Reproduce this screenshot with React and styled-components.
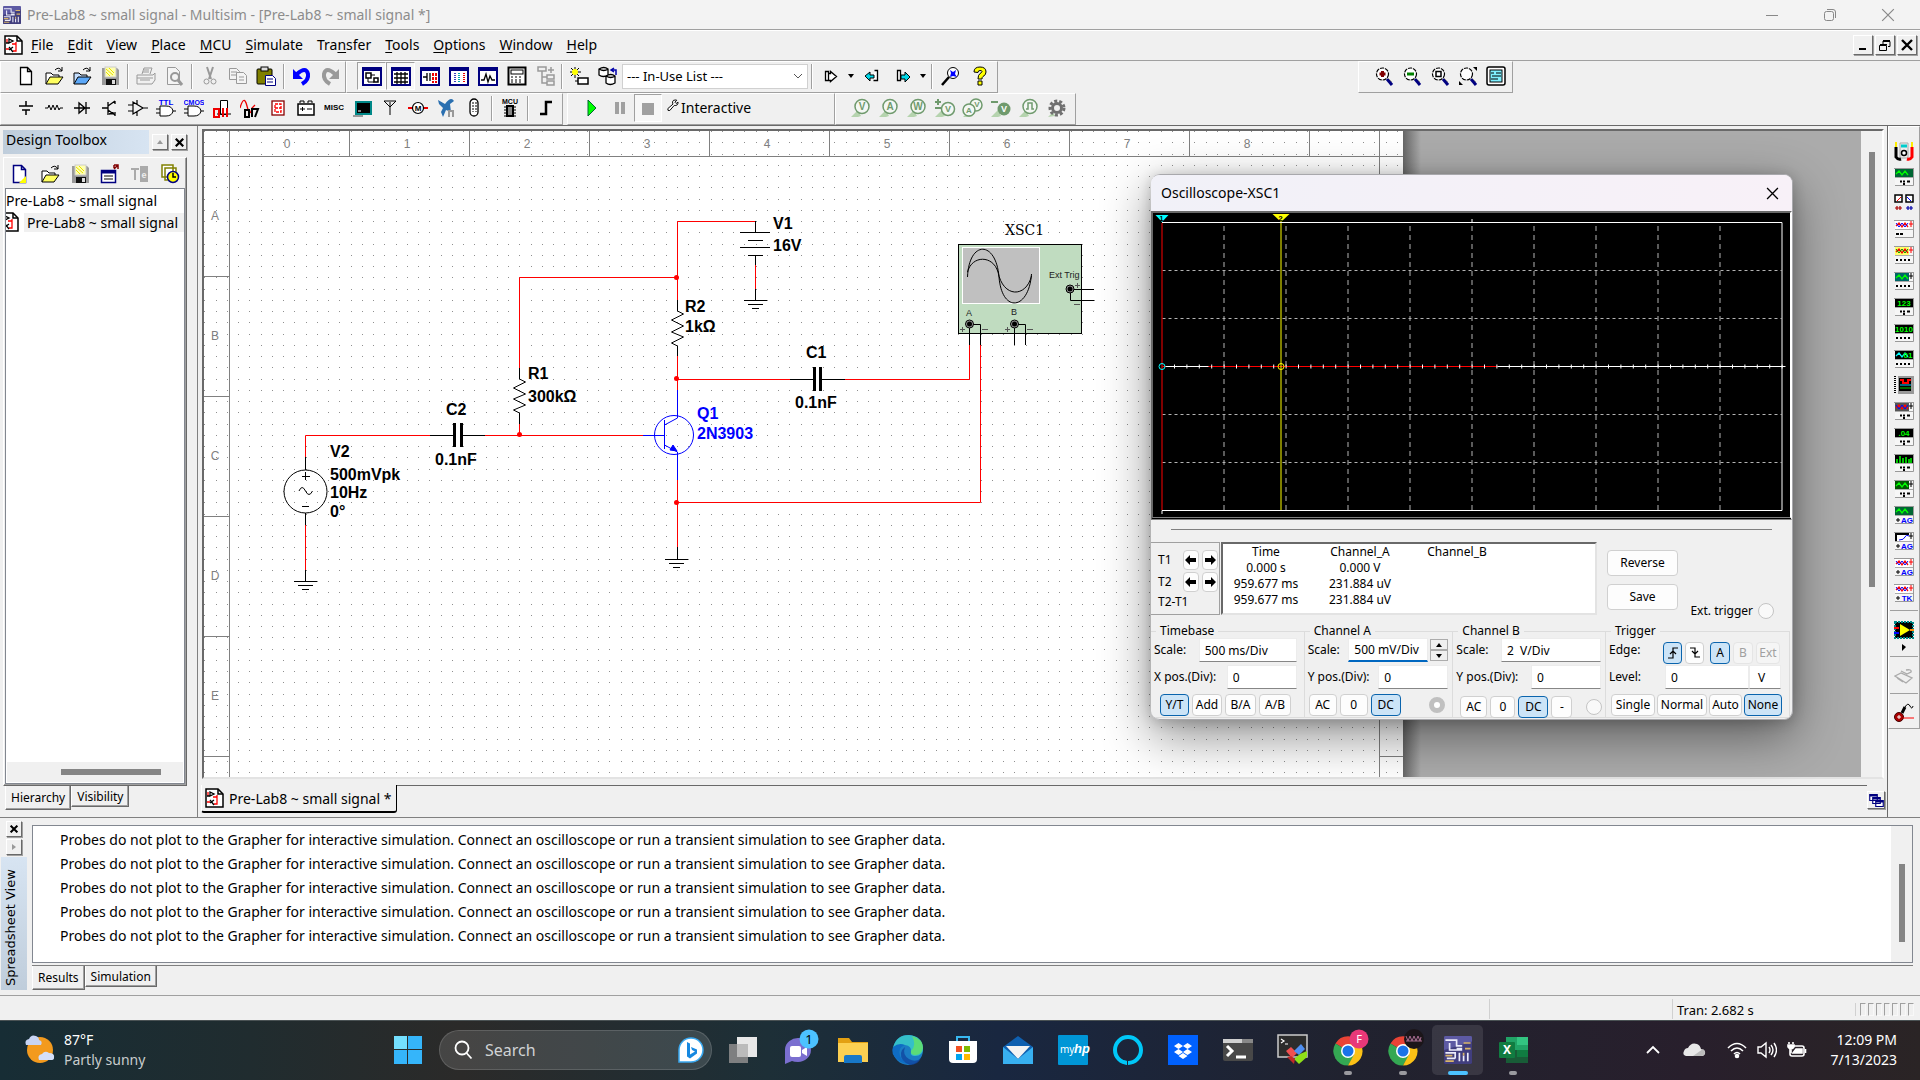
import { useState } from 'react';
import styled, { createGlobalStyle, css } from 'styled-components';

const UI = '"Noto Sans", "Open Sans", sans-serif';
const ARIAL = '"Liberation Sans", Arial, sans-serif';

const GlobalStyle = createGlobalStyle`
  *{ box-sizing: border-box; }
  body{
    margin: 0;
    background: #f0f0f0;
    font-family: ${UI};
    font-size: 14px;
    color: #000;
    overflow: hidden;
  }
  button, input, select{
    font: inherit;
    color: inherit;
    margin: 0;
    padding: 0;
    border: none;
    background: none;
  }
  ul{ list-style: none; margin: 0; padding: 0; }
  svg{ display: block; flex: none; }
`;

/* ---------- toolbar icons, drawn on a 20x20 field ---------- */

const page = <path d="M4.500 1.500h7l4 4v13h-11z M11.500 1.500v4h4" fill="#fff" stroke="#000" strokeWidth="1.300" />;
const lens = <><circle cx="8.500" cy="8" r="6" fill="#fff" stroke="#000" strokeWidth="1.200" strokeDasharray="4 1" /><path d="M13 13l5 6" stroke="#000080" strokeWidth="3" /><path d="M14 12l4 4" stroke="#999" /></>;
const frame = <><rect x="1" y="2" width="18" height="17" fill="#fff" stroke="#000080" strokeWidth="2" /><path d="M0 3h20" stroke="#000080" strokeWidth="4" /></>;
const openFolder = (a, b) => <><path d="M2 18V7h5l2 2h6v3" fill={b} stroke="#000" /><path d="M2 18l4-7h13l-5 7z" fill={a} stroke="#000" /><path d="M11 4q4-4 7 1M18 1v4h-4" fill="none" stroke="#000" /></>;
const floppy = <><path d="M2 2h15l2 2v15H2z" fill="#999" /><rect x="5" y="1" width="11" height="10" fill="#ffffb0" stroke="#ccc" /><path d="M6 3l7 6M9 2l5 5M6 6l4 4" stroke="#e6e000" /><rect x="6" y="13" width="10" height="6" fill="#111" /><rect x="12" y="14" width="3" height="4" fill="#ddd" /></>;

const Glyph = ({ t, x = 10, y = 14, size = 9, fill = '#000' }) => (
  <text x={x} y={y} fontSize={size} fontWeight="bold" fontFamily={ARIAL} textAnchor="middle" fill={fill}>{t}</text>
);

const gate = <><path d="M4 8h6q6 0 7 5q-1 5-7 5H4zM0 11h4M0 15h4M17 13h3" fill="#fff" stroke="#000" /></>;

const icons = {
  newDoc: page,
  open: openFolder('#ffff60', '#fff'),
  openBlue: openFolder('#5ca8f8', '#c5dfff'),
  save: floppy,
  print: <g fill="#f0f0f0" stroke="#999"><path d="M6 8l2-6h8l-2 6" /><path d="M1 9h16l2-2v7l-3 4H1z" /><path d="M4 14h10M8 4h5M7 6h6M1 12h16" /></g>,
  preview: <g fill="#f4f4f4" stroke="#999"><path d="M3.500 1.500h8l4 4v13h-12z" /><circle cx="11" cy="11" r="4" strokeWidth="2" /><path d="M14 14l4 5" strokeWidth="3" /></g>,
  cut: <g fill="none" stroke="#999"><path d="M7 1l4 12M13 1L9 13" strokeWidth="2" /><circle cx="6.500" cy="15.500" r="2.500" /><circle cx="13.500" cy="15.500" r="2.500" /></g>,
  copy: <g fill="#f4f4f4" stroke="#999"><path d="M1.500 2.500h7l3 3v8h-10zM3 6h6M3 9h5" /><path d="M8.500 6.500h7l3 3v8h-10zM11 11h5M11 14h5" /></g>,
  paste: <><rect x="1" y="3" width="15" height="15" rx="1" fill="#808000" stroke="#000" /><rect x="5" y="1" width="7" height="4" fill="#ddd" stroke="#000" /><path d="M9.500 9.500h7l3 3v7h-10z" fill="#fff" stroke="#000080" /><path d="M11 13h6M11 16h6" stroke="#000080" /></>,
  undo: <><path d="M5 8q9-8 11 0q1 6-6 10" fill="none" stroke="#00f" strokeWidth="4" /><path d="M1 3v10h10z" fill="#00f" /></>,
  redo: <><path d="M15 8q-9-8-11 0q-1 6 6 10" fill="none" stroke="#999" strokeWidth="4" /><path d="M19 3v10h-10z" fill="#999" /></>,
  toolbox: <>{frame}<rect x="4" y="7" width="5" height="5" fill="#fff" stroke="#000" strokeWidth="1.500" /><rect x="12" y="12" width="4" height="4" fill="#fff" stroke="#000" strokeWidth="1.500" /><path d="M6 12v4h6M9 9h4" fill="none" stroke="#000" /></>,
  sheet: <><rect x="1" y="2" width="18" height="17" fill="#fff" stroke="#000080" strokeWidth="2" /><path d="M0 3h20" stroke="#000080" strokeWidth="4" /><path d="M3 8h14M3 12h14M3 16h14M6 6v12M10 6v12M14 6v12" stroke="#000" strokeWidth="1.300" /></>,
  netlist: <>{frame}<path d="M3 11h4M7 7v8M10 7v8" stroke="#000" strokeWidth="1.300" /><path d="M13 7v10M16 7v10" stroke="#e00" strokeWidth="2" strokeDasharray="3 1" /></>,
  bars: <>{frame}<path d="M6 7v10" stroke="#00a" strokeDasharray="1 1" strokeWidth="1.500" /><path d="M10 7v10" stroke="#0aa" strokeDasharray="1 1" strokeWidth="2" /><path d="M15 7v10" stroke="#e00" strokeDasharray="1 1" strokeWidth="2" /></>,
  graph: <>{frame}<path d="M3 14h3l2-6 2 8 2-6 2 4h3" fill="none" stroke="#000" strokeWidth="1.300" /></>,
  calc: <><rect x="1.500" y="1.500" width="17" height="17" fill="#fff" stroke="#000" strokeWidth="2" /><rect x="4" y="4" width="12" height="4" fill="none" stroke="#000" /><path d="M4 11h12M4 14h12M4 16h12" stroke="#000" strokeDasharray="2 2" /></>,
  tree: <g fill="none" stroke="#999" strokeWidth="1.500"><rect x="2" y="1" width="8" height="4" /><path d="M6 5v12h5M6 11h5M15 1v6M12 4h6" /><rect x="11" y="9" width="7" height="4" /><rect x="11" y="15" width="7" height="4" /></g>,
  wizard: <><path d="M6 1v11M1 6h11M2 2l8 8M10 2l-8 8" stroke="#000" /><circle cx="6" cy="6" r="3" fill="#ff0" /><rect x="9" y="12" width="10" height="6" fill="#fff" stroke="#000" strokeWidth="1.500" /><path d="M6 15h3" stroke="#000" /></>,
  database: <><path d="M1 3q5-3 9 0v6q-5 3-9 0zM1 3q5 3 9 0M8 10q5-3 9 0v7q-5 3-9 0zM8 10q5 3 9 0" fill="#fff" stroke="#000" strokeWidth="1.300" /><path d="M18 9V4h-4M16 2l-3 2 3 2" fill="none" stroke="#00a" strokeWidth="1.500" /></>,
  markupA: <path d="M4.500 5.500h3v2h2v-2l6 5-6 5v-1h-5z M7.500 7v7" fill="#fff" stroke="#000" strokeWidth="1.300" />,
  markupB: <><path d="M12.500 4.500h3v10h-4" fill="#fff" stroke="#000" strokeWidth="1.300" /><path d="M3 10l5-4v3h4v3H8v3z" fill="#00d8e8" stroke="#000" /></>,
  markupC: <><path d="M4.500 4.500h3v10h-3z" fill="#fff" stroke="#000" strokeWidth="1.300" /><path d="M17 11l-5-5v3H8v4h4v3z" fill="#00d8e8" stroke="#000" /></>,
  find: <><circle cx="12" cy="7" r="5.500" fill="#fff" stroke="#000" /><path d="M9 4l3 2 3-2-1 4 2 3-4-1-3 1 1-4z" fill="#00f" /><path d="M8 11l-7 8" stroke="#000" strokeWidth="2.500" /></>,
  help: <path d="M4 6q0-5 6-5t6 5q0 3-3 4.500-1 .5-1 2.500H8q0-4 2-5.500 2-1 2-2t-2-1-2 2zM8 15h4v4H8z" fill="#ff0" stroke="#000" />,

  source: <path d="M10 3v5M3 8h14M6 12h8M10 12v5" fill="none" stroke="#000" strokeWidth="1.500" />,
  basic: <path d="M1 10h3l1-3 2 5 2-5 2 5 2-5 2 5 1-2h3" fill="none" stroke="#000" />,
  diode: <path d="M2 10h16M7 5v10l6-5zM14 4v12" fill="none" stroke="#000" strokeWidth="1.300" />,
  trans: <path d="M2 10h6M8 4v13M8 8l7-5M8 12l7 5M15 3v3M15 14v4M9 16l5-1" fill="none" stroke="#000" strokeWidth="1.300" />,
  opamp: <path d="M5 4v12l10-6zM0 7h5M0 13h5M15 10h5M9 2v4M9 14v4" fill="none" stroke="#000" strokeWidth="1.200" />,
  ttl: <>{gate}<Glyph t="TTL" y={7} size={8} fill="#00f" /></>,
  cmos: <>{gate}<Glyph t="CMOS" y={7} size={7} fill="#00f" /></>,
  miscDigital: <><path d="M8.500 2.500h7v14h-7zM5 16h14" fill="#fff" stroke="#000" /><path d="M2 11h5v8H2zM11 10v9M15 10v9" fill="none" stroke="#e00" strokeWidth="2" /></>,
  mixed: <><path d="M0 10q4-14 7-2t5 2l3-3" fill="none" stroke="#e00" strokeWidth="1.300" /><path d="M5 12h4v7H5zM12 19v-8h6l-3 8" fill="none" stroke="#000" strokeWidth="2" /></>,
  indicator: <><rect x="4" y="3" width="12" height="14" fill="#fff" stroke="#800" strokeWidth="1.300" /><path d="M7 6h6v8H7zM7 10h6" fill="none" stroke="#f00" strokeWidth="1.300" strokeDasharray="3 1" /></>,
  power: <><rect x="2" y="6" width="16" height="11" fill="#fff" stroke="#000" strokeWidth="1.500" /><path d="M4 5V3h4v2M12 5V3h4v2M4 11h5M11 11h5M6.500 9v4" fill="none" stroke="#000" /></>,
  misc: <Glyph t="MISC" y={12} size={8} />,
  peripheral: <><rect x="4" y="4" width="15" height="12" fill="#000" stroke="#088" strokeWidth="2" /><path d="M1 17h10v2H1z" fill="#999" /><path d="M6 13h3" stroke="#fff" /></>,
  rf: <path d="M10 17V9M4 3l6 6 6-6M10 4v5M4 3h12" fill="none" stroke="#000" />,
  motor: <><path d="M0 10h4M16 10h4" stroke="#e00" strokeWidth="2" /><circle cx="10" cy="10" r="5.500" fill="#fff" stroke="#000" strokeWidth="1.200" /><Glyph t="M" y={13} size={8} /></>,
  ni: <><path d="M2 2l7 4q6-8 9-3l-4 3 1 8-5-2-3 7-2-5 2-4-4-4z" fill="#2a6fb0" /><path d="M13 19v-6h4v6" fill="none" stroke="#999" strokeWidth="2" /></>,
  connector: <><rect x="6" y="1" width="8" height="17" rx="4" fill="#fff" stroke="#000" strokeWidth="1.300" /><path d="M9 4v10M12 4v10" stroke="#000" strokeDasharray="2 1" /></>,
  mcu: <><Glyph t="MCU" y={6} size={7} /><rect x="7" y="8" width="6" height="10" fill="#888" stroke="#000" strokeWidth="2" /><path d="M4 9h3M4 12h3M4 15h3M4 18h3M13 9h3M13 12h3M13 15h3M13 18h3" stroke="#000" /></>,
  hier: <path d="M4 16h6V4h6" fill="none" stroke="#000" strokeWidth="2.500" />,
  play: <path d="M6 2l8 8-8 8z" fill="#0f0" stroke="#063" />,
  pause: <path d="M5 4h4v12H5zM11 4h4v12h-4z" fill="#a0a0a0" />,
  stop: <path d="M4 5h12v12H4z" fill="#a0a0a0" />,
  wrench: <path d="M13 1q5-1 5 0l-3 3 2 2 3-2q0 6-6 5l-7 8q-4 1-3-3l8-7q-2-4 1-6z" fill="#fff" stroke="#000" strokeWidth="1.500" transform="scale(.8) translate(2 1)" />,
  plus: <>{lens}<path d="M8.500 5v6M5.500 8h6" stroke="#800000" strokeWidth="3" /></>,
  minus: <>{lens}<path d="M5 8h7" stroke="#008000" strokeWidth="3" /></>,
  area: <>{lens}<path d="M6 5.500h5v5H6z" fill="none" stroke="#000" strokeWidth="1.500" /></>,
  fit: <>{lens}<path d="M15 1h4v4zM1 15v4h4z" fill="#000" /></>,
  full: <><rect x="1" y="1" width="18" height="18" rx="2" fill="#fff" stroke="#000" strokeWidth="1.500" /><rect x="4" y="4" width="12" height="12" fill="#7ff0ff" stroke="#000" /><path d="M5 7h3M6 10h9M5 13h7M10 7h5" stroke="#000" /></>,

  newBlue: <><path d="M3.500 1.500h8l4 4v13h-12z M11.500 1.500v4h4" fill="#fff" stroke="#000080" strokeWidth="1.500" /><path d="M16 12v7h-7z" fill="#ff0" /></>,
  closeDoc: <><rect x="1.500" y="6.500" width="14" height="12" fill="#fff" stroke="#000080" strokeWidth="1.500" /><path d="M1 8h15" stroke="#000080" strokeWidth="3" /><path d="M4 12h9M4 15h9" stroke="#000" /><path d="M14 1h4v4M18 1l-4 4M14 1v3" stroke="#800000" strokeWidth="1.500" fill="none" /></>,
  rename: <><path d="M1 5h8M5 5v11" stroke="#aaa" strokeWidth="2" /><rect x="10" y="2" width="8" height="16" fill="#aaa" /><Glyph t="e" x={14} fill="#eee" /></>,
  history: <><path d="M2 1h11v12H2zM5 4h11v12H5z" fill="#fff" stroke="#808000" strokeWidth="1.500" /><circle cx="13" cy="13" r="5.500" fill="#ff0" stroke="#000080" strokeWidth="1.500" /><path d="M13 9v4h3" fill="none" stroke="#000" strokeWidth="1.500" /></>,
  schematic: <><path d="M1 1h12l5 5v13H1z" fill="#fff" stroke="#000" strokeWidth="1.500" /><path d="M13 1v5h5" fill="none" stroke="#000" strokeWidth="1.500" /><path d="M3 4v4M2 14h3M12 7v9h-3M8 9h4" fill="none" stroke="#f00" strokeWidth="1.300" /><path d="M5 4v4l4-2zM5 12l4 5M9 12l-4 3M2 8h3" fill="none" stroke="#000" strokeWidth="1.300" /></>,
  app: <><rect width="20" height="20" rx="1" fill="#5d5aa3" /><path d="M0 20V10L20 4v16z" fill="#2a2860" opacity=".55" /><path d="M1 3h8v4h4M4 5v5h9M9 9h4M1 12h7v4M11 18v-6M14 18v-4M17 18v-6M2 16h6" fill="none" stroke="#ececfa" strokeWidth="1.200" /><path d="M14 5h5M15 9h4M1 14h5M1 18h6M14 12v2" stroke="#d8b56a" strokeWidth="1.200" /></>,
  cascade: <><path d="M1 2h10v8H1zM5 6h10v8H5zM9 10h10v8H9z" fill="#fff" stroke="#000080" strokeWidth="1.500" /><path d="M1 3h10M5 7h10M9 11h10" stroke="#000080" strokeWidth="3" /></>
};

const probeText = { probeV: 'V', probeA: 'A', probeW: 'W' };

const Icon = ({ name, size = 20 }) => (
  <svg width={size} height={size} viewBox="0 0 20 20" aria-hidden="true">{icons[name]}</svg>
);

const Probe = ({ kind }) => {
  const green = '#6f9a6d';
  return (
    <svg width="22" height="20" viewBox="0 0 22 20" aria-hidden="true">
      {kind !== 'gear' && <path d="M1 19l7-7 3 6-3 1z" fill="#b5d3ae" />}
      {probeText[kind] && <><circle cx="12" cy="8.500" r="7" fill="#f4f7f4" stroke={green} strokeWidth="1.500" /><Glyph t={probeText[kind]} x={12} y={12} size={10} fill={green} /></>}
      {kind === 'diff' && <><circle cx="14" cy="11" r="6.500" fill="#f4f7f4" stroke={green} strokeWidth="1.500" /><Glyph t="V" x={14} y={14} fill={green} /><path d="M1 4h6M4 1v6M1 10h6" stroke={green} strokeWidth="2" /></>}
      {kind === 'dual' && <><circle cx="14" cy="7" r="6" fill="#f4f7f4" stroke={green} strokeWidth="1.500" /><circle cx="7" cy="12" r="6" fill="#f4f7f4" stroke={green} strokeWidth="1.500" /><Glyph t="A" x={7} y={15} size={8} fill={green} /><Glyph t="V" x={15} y={9} size={8} fill={green} /></>}
      {kind === 'ref' && <><circle cx="14" cy="11" r="6.500" fill={green} /><Glyph t="V" x={14} y={14} fill="#fff" /><path d="M1 4h7" stroke={green} strokeWidth="2" /></>}
      {kind === 'digital' && <><circle cx="12" cy="8.500" r="7" fill="#f4f7f4" stroke={green} strokeWidth="1.500" /><path d="M8 11h2V5h4v6h2" fill="none" stroke={green} strokeWidth="1.500" /></>}
      {kind === 'gear' && <><path d="M2 19l5-5 2 4z" fill="#b5d3ae" /><circle cx="11" cy="10" r="7" fill="none" stroke="#707070" strokeWidth="3" strokeDasharray="3 2" /><circle cx="11" cy="10" r="4.500" fill="none" stroke="#707070" strokeWidth="3" /></>}
    </svg>
  );
};

/* ---------- shared window chrome ---------- */

const Screen = styled.div`
  position: relative;
  display: flex;
  flex-direction: column;
  height: 100vh;
  background: #f0f0f0;
`;

const TitleBar = styled.header`
  display: flex;
  align-items: center;
  gap: 6px;
  height: 30px;
  padding-left: 3px;
  background: #f3f3f3;
  border-bottom: 1px solid #a0a0a0;
  color: #8c8c8c;
`;

const WindowButtons = styled.div`
  display: flex;
  margin-left: auto;
  padding-right: 3px;
  button{
    width: 58px;
    height: 29px;
    display: grid;
    place-items: center;
  }
`;

const MenuBar = styled.nav`
  display: flex;
  align-items: center;
  height: 31px;
  padding: 0 3px 2px 4px;
  border-top: 1px solid #fff;
  border-bottom: 1px solid #a0a0a0;
`;

const MenuItem = styled.button`
  padding: 0 7px;
  white-space: nowrap;
  u{ text-underline-offset: 2px; }
`;

const MdiButtons = styled.div`
  display: flex;
  gap: 2px;
  margin-left: auto;
`;

const BevelButton = styled.button`
  display: grid;
  place-items: center;
  width: ${p => p.$size || 20}px;
  height: ${p => p.$size || 20}px;
  background: #f0f0f0;
  border: 1px solid;
  border-color: #fff #696969 #696969 #fff;
  box-shadow: 1px 1px 0 #a0a0a0;
`;

const ToolRow = styled.div`
  display: flex;
  height: ${p => p.$height}px;
`;

const ToolGroup = styled.div`
  display: flex;
  align-items: center;
  padding: 0 ${p => p.$end || 2}px 2px ${p => p.$start || 11}px;
  margin-left: ${p => p.$gap || 0}px;
  width: ${p => (p.$width ? p.$width + 'px' : 'auto')};
  border: 1px solid;
  border-color: #fff #a0a0a0 #a0a0a0 #fff;
`;

const ToolButton = styled.button`
  display: grid;
  place-items: center;
  width: ${p => p.$width || 28}px;
  height: 28px;
  ${p => p.$pressed && css`
    background: #f7f7f7;
    border: 1px solid;
    border-color: #a0a0a0 #fff #fff #a0a0a0;
  `}
`;

const Divider = styled.span`
  width: 2px;
  height: 25px;
  margin: 0 ${p => (p.$tight ? 1 : 3)}px;
  border-left: 1px solid #a0a0a0;
  border-right: 1px solid #fff;
`;

const DropArrow = styled.button`
  width: 10px;
  height: 24px;
  display: grid;
  place-items: center;
  &::after{
    content: '';
    border: 3px solid transparent;
    border-top: 4px solid #000;
    border-bottom: none;
  }
`;

const SelectBox = styled.div`
  position: relative;
  select{
    appearance: none;
    width: 186px;
    height: 25px;
    padding-left: 4px;
    font-size: 13px;
    background: #fff;
    border: 1px solid #d0d0d0;
  }
  svg{
    position: absolute;
    right: 5px;
    top: 9px;
    pointer-events: none;
  }
`;

const Analysis = styled.button`
  display: flex;
  align-items: center;
  gap: 1px;
  padding: 0 0 2px 2px;
`;

/* ---------- middle area ---------- */

const Main = styled.main`
  display: flex;
  flex: 1;
  min-height: 0;
  border-top: 1px solid #696969;
`;

const Dock = styled.aside`
  display: flex;
  flex-direction: column;
  flex: none;
  width: 198px;
  padding: 4px 10px 7px 3px;
  border-right: 1px solid #808080;
`;

const DockHeader = styled.div`
  display: flex;
  align-items: center;
  gap: 3px;
  height: 24px;
  h2{
    flex: 1;
    height: 24px;
    margin: 0;
    padding-left: 3px;
    font-size: 14px;
    font-weight: 400;
    line-height: 20px;
    background: linear-gradient(90deg, #bfcddb, #d7e4f2);
  }
`;

const DockPanel = styled.div`
  display: flex;
  flex-direction: column;
  flex: 1;
  min-height: 0;
  margin-top: 3px;
  padding: 2px 1px 1px;
  border: 1px solid;
  border-color: #fff #696969 #696969 #fff;
  box-shadow: inset -1px -1px 0 #a0a0a0;
`;

const DockTools = styled.div`
  display: flex;
  height: 28px;
  align-items: center;
`;

const Tree = styled.div`
  display: flex;
  flex-direction: column;
  flex: 1;
  min-height: 0;
  overflow: hidden;
  background: #fff;
  border: 1px solid #828790;
  li{
    display: flex;
    align-items: center;
    height: 22px;
    white-space: nowrap;
  }
  li > svg{ margin-left: -6px; }
  li + li span{
    flex: 1;
    margin-left: 4px;
    padding-left: 3px;
    background: #f0f0f0;
  }
`;

const HScroll = styled.div`
  margin: auto 1px 1px;
  padding: 7px 22px 7px 54px;
  height: 20px;
  background: #f0f0f0;
  &::after{
    content: '';
    display: block;
    height: 6px;
    background: #858585;
  }
`;

const Tabs = styled.div`
  display: flex;
  align-items: flex-start;
  font-size: 12px;
  padding-top: ${p => p.$top || 0}px;
  padding-left: ${p => p.$indent || 0}px;
`;

const Tab = styled.button`
  height: ${p => (p.$active ? 24 : 21)}px;
  padding: 0 5px;
  border: 1px solid;
  border-top: none;
  border-color: ${p => (p.$active ? '#fff' : '#696969')} #696969 #696969 #fff;
  box-shadow: inset -1px -1px 0 #a0a0a0;
`;

const Center = styled.section`
  display: flex;
  flex-direction: column;
  flex: 1;
  min-width: 0;
  padding: 3px 0 0 3px;
`;

const CanvasFrame = styled.div`
  display: flex;
  flex: 1;
  min-height: 0;
  margin: 0 3px 0 1px;
  border: 2px solid #696969;
  border-color: #696969 #fff #e3e3e3 #696969;
`;

const CanvasView = styled.div`
  display: flex;
  flex: 1;
  min-width: 0;
  overflow: hidden;
  background: #ababab;
`;

const PageShadow = styled.div`
  width: 18px;
  background: linear-gradient(90deg, #666, #ababab);
`;

const VScroll = styled.div`
  width: 21px;
  padding: ${p => p.$top}px 6px 0 8px;
  background: #f0f0f0;
  &::after{
    content: '';
    display: block;
    width: 6px;
    height: ${p => p.$thumb}px;
    background: #858585;
  }
`;

const DocTabs = styled.div`
  display: flex;
  align-items: flex-start;
  height: 38px;
  padding: 6px 2px 0 0;
  > button:last-child{ margin-top: 6px; }
`;

const DocTab = styled.button`
  display: flex;
  align-items: center;
  gap: 4px;
  height: 28px;
  padding: 0 5px 0 3px;
  border: 1px solid #000;
  border-top: none;
  border-left-color: #fff;
  border-bottom-width: 2px;
  border-radius: 0 0 3px 3px;
  white-space: nowrap;
`;

const DocRule = styled.div`
  flex: 1;
  height: 28px;
  border-top: 1px solid #696969;
`;

const Instruments = styled.aside`
  flex: none;
  width: 33px;
  border-left: 1px solid #696969;
  > div{
    display: flex;
    flex-direction: column;
    align-items: center;
    padding: 11px 0 2px;
    border: 1px solid;
    border-color: #fff #a0a0a0 #a0a0a0 #fff;
  }
  button{
    display: grid;
    place-items: center;
    height: 26px;
    width: 26px;
  }
  hr{
    width: 28px;
    margin: 4px 0 6px;
    border: none;
    border-top: 1px solid #a0a0a0;
  }
`;

/* ---------- schematic ---------- */

const columns = [0, 1, 2, 3, 4, 5, 6, 7, 8];
const rows = ['A', 'B', 'C', 'D', 'E'];

const Port = ({ x, y }) => (
  <g><circle cx={x} cy={y} r="4" fill="#999" stroke="#000" /><circle cx={x} cy={y} r="2.500" fill="#000" /></g>
);

const Ground = ({ x, y }) => (
  <path d={`M${x - 11} ${y}h23M${x - 7} ${y + 4}h15M${x - 3} ${y + 8}h7`} stroke="#000" fill="none" />
);

const Schematic = () => (
  <svg width="1199" height="647" viewBox="204 131 1199 647">
    <defs>
      <pattern id="dots" x="204" y="142" width="45" height="45" patternUnits="userSpaceOnUse">
        {[0, 12, 23, 34].map(x => [0, 12, 23, 34].map(y => (
          <rect key={x + '-' + y} x={x} y={y} width="1" height="1" fill="#8f8f8f" />
        )))}
      </pattern>
    </defs>
    <rect x="204" y="131" width="1199" height="647" fill="#fff" />
    <rect x="204" y="131" width="1199" height="647" fill="url(#dots)" />
    <g stroke="#808080" fill="none">
      <path d="M204 156.500h1199M229.500 131v647M1379.500 131v647" />
      {columns.map(c => <path key={c} d={`M${349.5 + c * 120} 131v25`} />)}
      {rows.map((r, i) => <path key={r} d={`M204 ${276.5 + i * 120}h25M1379 ${276.5 + i * 120}h24`} />)}
    </g>
    <g fontFamily={ARIAL} fontSize="12" fill="#808080" textAnchor="middle">
      {columns.map(c => <text key={c} x={287 + c * 120} y="148">{c}</text>)}
      {rows.map((r, i) => <text key={r} x="215" y={220 + i * 120}>{r}</text>)}
    </g>

    <g stroke="#f00" fill="none">
      <path d="M305.500 457V435.500H430M485 435.500H643M305.500 525v45" />
      <path d="M519.500 368V277.500H677M519.500 424v11" />
      <path d="M677.500 300V221.500H755.500M755.500 265v24" />
      <path d="M677.500 356v34M677 379.500H790M845 379.500H969.500V345" />
      <path d="M677.500 480v67M677 502.500H980.500V345" />
    </g>
    <g fill="#f00">
      {[[519.5, 434.5], [676.5, 277.5], [676.5, 378.5], [676.5, 502.5]].map(([x, y]) => <circle key={x + y} cx={x} cy={y} r="2.500" />)}
    </g>

    <g stroke="#000" fill="none">
      <path d="M305.500 457v13M305.500 513v12M305.500 570v11M302 476.500h8M305.500 472v8M302 506.500h7" />
      <circle cx="305.500" cy="491.500" r="21.500" />
      <path d="M299 491q3-7 6.500 0t7 0" />
      <path d="M430 435.500h24M461 435.500h24M790 379.500h24M821 379.500h24" />
      <path d="M454.500 423v24M461.500 423v24M814.500 367v24M820.500 367v24" strokeWidth="3" />
      <path d="M519.500 368v11l6 3-12 6 12 6-12 5 12 6-12 5 6 3v11" />
      <path d="M677.500 300v11l6 3-12 6 12 6-12 6 12 5-12 6 6 3v10" />
      <path d="M755.500 221v11M740 232.500h30M748 240.500h15M740 247.500h30M748 255.500h15M755.500 256v9M755.500 289v11M677.500 547v12" />
    </g>
    <Ground x={305} y={581.5} />
    <Ground x={755} y={300.5} />
    <Ground x={676} y={559.5} />

    <g stroke="#00f" fill="none">
      <circle cx="674" cy="435" r="19.500" />
      <path d="M643 435.500h22M664.500 420v29M677.500 390v28l-13 7M664.500 445l13 7v28" />
      <path d="M670 450l3-5 4 6z" fill="#00f" />
    </g>

    <rect x="958.500" y="244.500" width="123" height="89" fill="#c0dcc0" stroke="#000" />
    <rect x="962.500" y="247.500" width="77" height="56" fill="#c0c0c0" stroke="#fff" />
    <g stroke="#000" fill="none">
      <path d="M967.500 277C969 240 996 240 999 277S1029 310 1031.500 274" />
      <path d="M967.500 272C972 255 993 255 998 272C1003 298 1026 298 1031.500 276" />
      <path d="M1070 289.500h24M1070.500 289v11.500h24M969.500 324v21M970 324.500h10.500v20.500M1014.500 324v21M1015 324.500h10.500v20.500" />
      <path d="M1075 285.500h5M1077.500 283v5M1074 304.500h6M960 329.500h5M962.500 327v5M982 329.500h6M1005 329.500h5M1007.500 327v5M1027 329.500h6" stroke="#555" />
    </g>
    <Port x={1070} y={289} />
    <Port x={969.5} y={324} />
    <Port x={1014.5} y={324} />
    <g fontFamily={ARIAL} fontSize="9" fill="#222">
      <text x="1049" y="278">Ext Trig</text>
      <text x="966" y="316">A</text>
      <text x="1011" y="315">B</text>
    </g>
    <text x="1005" y="235" fontFamily='"DejaVu Serif", serif' fontSize="14">XSC1</text>

    <g fontFamily={ARIAL} fontSize="16" fontWeight="bold">
      <text x="330" y="457">V2</text>
      <text x="330" y="480">500mVpk</text>
      <text x="330" y="498">10Hz</text>
      <text x="330" y="517">0°</text>
      <text x="446" y="415">C2</text>
      <text x="435" y="465">0.1nF</text>
      <text x="528" y="379">R1</text>
      <text x="528" y="402">300kΩ</text>
      <text x="685" y="312">R2</text>
      <text x="685" y="332">1kΩ</text>
      <text x="773" y="229">V1</text>
      <text x="773" y="251">16V</text>
      <text x="806" y="358">C1</text>
      <text x="795" y="408">0.1nF</text>
      <g fill="#00f">
        <text x="697" y="419">Q1</text>
        <text x="697" y="439">2N3903</text>
      </g>
    </g>
  </svg>
);

/* ---------- instrument column ---------- */

const wave = 'M2 6l3-3 3 4 3-4 3 4';
const instrumentList = [
  { label: 'Multimeter', special: 'meter' },
  { label: 'Function generator', bg: '#063', line: '#0f0', pins: 'few' },
  { label: 'Wattmeter', special: 'watt' },
  { label: 'Oscilloscope', bg: '#fff', line: '#f00', line2: '#00f', side: '#f00', pins: 'two' },
  { label: 'Four channel oscilloscope', bg: '#ff6', line: '#f00', line2: '#080', side: '#f00' },
  { label: 'Bode plotter', bg: '#066', line: '#0f0', side: '#000' },
  { label: 'Frequency counter', bg: '#000', text: '123', pins: 'few' },
  { label: 'Word generator', bg: '#000', text: '1010' },
  { label: 'Logic converter', bg: '#000', line: '#0ff', text: '01' },
  { label: 'Logic analyzer', special: 'logic' },
  { label: 'IV analyzer', bg: '#555', line: '#f00', line2: '#00f', side: '#000', pins: 'few' },
  { label: 'Distortion analyzer', bg: '#000', text: '.04', pins: 'few' },
  { label: 'Spectrum analyzer', bg: '#000', bars: true, pins: 'few' },
  { label: 'Network analyzer', bg: '#050', line: '#0f0', side: '#000', pins: 'few' },
  { label: 'Agilent function generator', bg: '#063', line: '#0f0', brand: 'AG' },
  { label: 'Agilent multimeter', bg: '#fff', curve: true, side: '#000', brand: 'AG' },
  { label: 'Agilent oscilloscope', bg: '#fff', line: '#f00', line2: '#00f', side: '#f00', brand: 'AG' },
  { label: 'Tektronix oscilloscope', bg: '#fff', line: '#f00', line2: '#00f', side: '#f00', brand: 'TK' }
];

const pinRows = { few: 'M6 13.500h2M9 13.500h2M13 13.500h3M9 16h2', two: 'M2 14h3M6 14h3', all: 'M2 14h2M6 14h2M10 14h2M14 14h2' };

const InstrumentIcon = ({ item }) => {
  if (item.special === 'meter') return (
    <svg width="20" height="20" viewBox="0 0 20 20"><path d="M6 2h8v15H6z" fill="#eee" stroke="#aaa" /><path d="M7 5h6" stroke="#0cc" strokeWidth="3" /><circle cx="10" cy="12" r="2.500" fill="#fff" stroke="#000" strokeWidth="1.500" /><path d="M2 1v5M18 1v5" stroke="#fe0" strokeWidth="2" /><path d="M2 6v10q2 3 5 2" stroke="#000" strokeWidth="3" fill="none" /><path d="M18 6v10q-2 3-5 2" stroke="#f00" strokeWidth="3" fill="none" /></svg>
  );
  if (item.special === 'watt') return (
    <svg width="20" height="18" viewBox="0 0 20 18"><path d="M1 1h7v7H1zM12 1h7v7h-7z" fill="#fff" stroke="#000" strokeWidth="1.500" /><path d="M3 7l4-4" stroke="#f00" /><path d="M13 3l4 4" stroke="#00f" /><path d="M1 14h7M3 12v4M6 12v4" stroke="#a00" strokeWidth="1.200" /><path d="M12 14h7M14 12v4M17 12v4" stroke="#00a" strokeWidth="1.200" /></svg>
  );
  if (item.special === 'logic') return (
    <svg width="20" height="18" viewBox="0 0 20 18"><path d="M1 0v18" stroke="#000" strokeWidth="2" strokeDasharray="1 1" /><path d="M4 0h16v18H4z" fill="#999" /><path d="M5 2h12v13H5z" fill="#000" /><path d="M6 4h3v3h5V4h3" stroke="#f00" strokeWidth="2" fill="none" /><path d="M6 9h11" stroke="#0cf" /><path d="M6 12h11" stroke="#0c0" /></svg>
  );
  return (
    <svg width="20" height="18" viewBox="0 0 20 18">
      <path d="M0 .5h20M19.500 0v17.500H1" fill="none" stroke="#999" />
      <rect x="1" y="1" width="18" height="16" fill="#f6f6f6" />
      <rect x="1" y="1" width={item.side ? 14 : 18} height="8" fill={item.bg} />
      <path d="M1 9.500h18" stroke="#aaa" />
      {item.line && <path d={wave} fill="none" stroke={item.line} strokeWidth="1.300" />}
      {item.line2 && <path d="M2 3l3 4 3-4 3 4 3-4" fill="none" stroke={item.line2} />}
      {item.curve && <><path d="M1 2h14M2 1v8" stroke="#000" strokeWidth="2" /><path d="M5 8q5 0 6-3t4-1" fill="none" stroke="#00f" /></>}
      {item.bars && <path d="M3 9V5M6 9V2M9 9V4M12 9V3M15 9V5M17 9V4" stroke="#0f0" strokeWidth="1.500" />}
      {item.side && <path d="M15 4h4M17 1v6" stroke={item.side} />}
      {item.text && <Glyph t={item.text} x={item.line ? 14 : 10} y={8} size={8} fill="#0f0" />}
      {item.brand ? <><path d="M2 14h4M4 12v4" stroke="#000" /><Glyph t={item.brand} x={13} y={17} size={8} fill="#00f" /></>
        : <path d={pinRows[item.pins || 'all']} stroke="#000" strokeWidth="2" />}
    </svg>
  );
};

/* ---------- oscilloscope window ---------- */

const ScopeWindow = styled.section`
  position: absolute;
  top: 174px;
  right: 127px;
  width: 642px;
  background: #f0f0f0;
  border: 1px solid #a8a8ac;
  border-left: none;
  border-radius: 9px;
  overflow: hidden;
  font-size: 12px;
  line-height: 16px;
`;

const ScopeShadow = styled.div`
  position: absolute;
  top: 174px;
  right: 127px;
  width: 642px;
  height: 546px;
  border-radius: 9px;
  box-shadow: 0 16px 50px rgba(0, 0, 0, .45), 0 2px 14px rgba(0, 0, 0, .2);
`;

const ScopeTitle = styled.div`
  display: flex;
  align-items: center;
  justify-content: space-between;
  height: 36px;
  padding: 0 13px 0 10px;
  font-size: 14px;
  background: linear-gradient(90deg, #f1f1f8, #f8f1f8);
`;

const Display = styled.div`
  background: #000;
  border: 2px solid;
  border-color: #696969 #fff #fff #696969;
  border-bottom: 3px double #808080;
`;

const ScopeRule = styled.hr`
  margin: 9px 20px 12px;
  border: none;
  border-top: 1px solid #808080;
`;

const Readout = styled.div`
  display: flex;
  height: 73px;
`;

const Cursors = styled.div`
  display: grid;
  grid-template-columns: 22px 16px 16px;
  column-gap: 3px;
  row-gap: 2px;
  align-content: start;
  align-items: center;
  width: 69px;
  padding: 7px 3px 0 7px;
  border: 1px solid #a0a0a0;
  border-left: none;
  > span{ white-space: nowrap; }
`;

const ArrowButton = styled.button`
  display: grid;
  place-items: center;
  height: 20px;
  background: #fdfdfd;
  border: 1px solid #d0d0d0;
  border-radius: 4px;
`;

const ReadTable = styled.div`
  width: 376px;
  margin-left: 1px;
  background: #fff;
  border: 2px solid;
  border-color: #696969 #e3e3e3 #e3e3e3 #696969;
  table{
    border-collapse: collapse;
    table-layout: fixed;
    width: 280px;
  }
  th, td{
    padding: 0;
    height: 16px;
    font-weight: 400;
    text-align: center;
    white-space: nowrap;
  }
`;

const ReadActions = styled.div`
  display: flex;
  flex-direction: column;
  gap: 8px;
  padding: 8px 0 0 10px;
`;

const SoftButton = styled.button`
  height: ${p => p.$height || 22}px;
  width: ${p => p.$width}px;
  line-height: 16px;
  text-align: center;
  display: grid;
  place-items: center;
  background: ${p => (p.$on ? '#cce4f7' : '#fdfdfd')};
  border: 1px solid ${p => (p.$on ? '#0a64ad' : '#d0d0d0')};
  border-radius: 4px;
  &:disabled{
    color: #a0a0a0;
    background: #f5f5f5;
    border-color: #e5e5e5;
  }
`;

const ExtTrigger = styled.label`
  display: flex;
  align-items: center;
  align-self: flex-end;
  gap: 5px;
  margin: 0 18px -4px auto;
`;

const Radio = styled.input`
  appearance: none;
  width: 16px;
  height: 16px;
  border: 1px solid #c4c4c4;
  border-radius: 50%;
  background: #f9f9f9;
  &:checked{ border: 5px solid #c0c0c0; background: #fff; }
`;

const Groups = styled.div`
  display: flex;
  padding: 9px 2px 1px 0;
`;

const Group = styled.fieldset`
  display: flex;
  flex-direction: column;
  gap: 3px;
  width: ${p => p.$width}px;
  height: 94px;
  margin: 0;
  padding: 0 0 0 3px;
  border: 1px solid #dcdcdc;
  border-left-width: ${p => (p.$first ? 0 : 1)}px;
  border-right: none;
  &:last-child{ border-right: 1px solid #dcdcdc; }
  legend{ margin-left: 2px; padding: 0 4px; line-height: 14px; }
`;

const Field = styled.div`
  display: flex;
  align-items: center;
  height: 24px;
  padding-right: ${p => p.$end || 4}px;
  white-space: nowrap;
  label{ flex: 1; }
`;

const TextBox = styled.input`
  width: ${p => p.$width}px;
  height: 24px;
  padding-left: 5px;
  background: #fff;
  border: 1px solid #ececec;
  border-bottom: ${p => (p.$focus ? '2px solid #0067c0' : '1px solid #868686')};
`;

const Spinner = styled.div`
  display: flex;
  flex-direction: column;
  width: 18px;
  margin-left: 2px;
  button{
    height: 11px;
    display: grid;
    place-items: center;
    background: #f0f0f0;
    border: 1px solid #acacac;
  }
`;

const ButtonLine = styled.div`
  display: flex;
  align-items: center;
  gap: ${p => p.$gap || 3}px;
  padding: ${p => p.$top || 2}px ${p => (p.$end ?? 7)}px 0 ${p => (p.$indent ?? 6)}px;
  input{ margin-left: auto; }
`;

const Traces = () => (
  <svg width="100%" height="304" viewBox="1154 213 636 304" preserveAspectRatio="xMidYMid meet">
    <rect x="1154" y="213" width="636" height="304" fill="#000" />
    <g stroke="#b4b4b4" strokeDasharray="5 4" fill="none">
      {[1, 2, 3, 4, 5, 6, 7, 8, 9].map(i => <path key={i} d={`M${1162.5 + i * 62} 226V510`} />)}
      {[1, 2, 4, 5].map(i => <path key={i} strokeDasharray="3 3" d={`M1163 ${222.5 + i * 48}H1782`} />)}
    </g>
    <path d="M1162.500 222.500H1782.500V510.500H1162.500V514M1472.500 219v4" fill="none" stroke="#fff" />
    <path d="M1162.500 223V510M1163 366.500H1498" stroke="#f00" />
    <path d="M1166 366.500H1209M1498 366.500H1786" stroke="#fff" />
    <path d="M1174.500 366.500H1786" stroke="#fff" strokeWidth="4" strokeDasharray="1 11.400" />
    <path d="M1281.500 223V510" stroke="#ff0" />
    <path d="M1156 215h13l-6.500 7z" fill="#0ff" />
    <path d="M1273 214h17l-8.500 8z" fill="#ff0" />
    <Glyph t="1" x={1162} y={221} size={7} />
    <Glyph t="2" x={1281} y={221} size={8} />
    <circle cx="1162.500" cy="366.500" r="3" fill="none" stroke="#0ff" />
    <circle cx="1281.500" cy="366.500" r="3" fill="none" stroke="#ff0" />
  </svg>
);

const Arrow = ({ left }) => (
  <svg width="12" height="12" viewBox="0 0 12 12" aria-hidden="true">
    <path d={left ? 'M0 6l5-5v3h6v4H5v3z' : 'M12 6L7 1v3H1v4h6v3z'} fill="#000" />
  </svg>
);

const Cross = ({ size = 12, color = '#000', width = 1.2 }) => (
  <svg width={size} height={size} viewBox="0 0 12 12" aria-hidden="true"><path d="M1 1l10 10M11 1L1 11" stroke={color} strokeWidth={width} /></svg>
);

const Choices = ({ options, value, onChange }) => options.map(([text, width]) => (
  <SoftButton key={text} $width={width} $on={value === text} onClick={() => onChange(text)}>{text}</SoftButton>
));

const Oscilloscope = () => {
  const [mode, setMode] = useState('Y/T');
  const [coupA, setCoupA] = useState('DC');
  const [coupB, setCoupB] = useState('DC');
  const [trig, setTrig] = useState('None');

  return (
    <>
      <ScopeShadow />
      <ScopeWindow>
        <ScopeTitle>
          <span>Oscilloscope-XSC1</span>
          <button aria-label="Close oscilloscope"><Cross size={13} /></button>
        </ScopeTitle>
        <Display><Traces /></Display>
        <ScopeRule />
        <Readout>
          <Cursors>
            <span>T1</span>
            <ArrowButton aria-label="T1 left"><Arrow left /></ArrowButton>
            <ArrowButton aria-label="T1 right"><Arrow /></ArrowButton>
            <span>T2</span>
            <ArrowButton aria-label="T2 left"><Arrow left /></ArrowButton>
            <ArrowButton aria-label="T2 right"><Arrow /></ArrowButton>
            <span>T2-T1</span>
          </Cursors>
          <ReadTable>
            <table>
              <colgroup><col width="86" /><col width="102" /><col width="92" /></colgroup>
              <thead><tr><th>Time</th><th>Channel_A</th><th>Channel_B</th></tr></thead>
              <tbody>
                <tr><td>0.000 s</td><td>0.000 V</td><td /></tr>
                <tr><td>959.677 ms</td><td>231.884 uV</td><td /></tr>
                <tr><td>959.677 ms</td><td>231.884 uV</td><td /></tr>
              </tbody>
            </table>
          </ReadTable>
          <ReadActions>
            <SoftButton $width={71} $height={26}>Reverse</SoftButton>
            <SoftButton $width={71} $height={26}>Save</SoftButton>
          </ReadActions>
          <ExtTrigger>Ext. trigger<Radio type="radio" name="ext" /></ExtTrigger>
        </Readout>
        <Groups>
          <Group $width={154} $first>
            <legend>Timebase</legend>
            <Field $end={7}><label htmlFor="tb-scale">Scale:</label><TextBox id="tb-scale" $width={98} defaultValue="500 ms/Div" /></Field>
            <Field $end={7}><label htmlFor="tb-pos">X pos.(Div):</label><TextBox id="tb-pos" $width={70} defaultValue="0" /></Field>
            <ButtonLine><Choices options={[['Y/T', 29], ['Add', 30], ['B/A', 31], ['A/B', 32]]} value={mode} onChange={setMode} /></ButtonLine>
          </Group>
          <Group $width={150}>
            <legend>Channel A</legend>
            <Field>
              <label htmlFor="a-scale">Scale:</label>
              <TextBox id="a-scale" $width={80} $focus defaultValue="500 mV/Div" />
              <Spinner>
                <button aria-label="Increase scale"><svg width="6" height="4"><path d="M0 4l3-4 3 4z" /></svg></button>
                <button aria-label="Decrease scale"><svg width="6" height="4"><path d="M0 0l3 4 3-4z" /></svg></button>
              </Spinner>
            </Field>
            <Field><label htmlFor="a-pos">Y pos.(Div):</label><TextBox id="a-pos" $width={70} defaultValue="0" /></Field>
            <ButtonLine $indent={1}>
              <Choices options={[['AC', 28], ['0', 28], ['DC', 30]]} value={coupA} onChange={setCoupA} />
              <Radio type="radio" name="chan" aria-label="Trace channel A" defaultChecked />
            </ButtonLine>
          </Group>
          <Group $width={154}>
            <legend>Channel B</legend>
            <Field><label htmlFor="b-scale">Scale:</label><TextBox id="b-scale" $width={100} defaultValue="2  V/Div" /></Field>
            <Field><label htmlFor="b-pos">Y pos.(Div):</label><TextBox id="b-pos" $width={70} defaultValue="0" /></Field>
            <ButtonLine $indent={4} $end={3} $top={4}>
              <Choices options={[['AC', 27], ['0', 25], ['DC', 30], ['-', 21]]} value={coupB} onChange={setCoupB} />
              <Radio type="radio" name="chan" aria-label="Trace channel B" />
            </ButtonLine>
          </Group>
          <Group $width={181}>
            <legend>Trigger</legend>
            <Field>
              <label>Edge:</label>
              <ButtonLine $indent={0} $top={6} $end={5}>
                <SoftButton $width={19} $on aria-label="Rising edge"><svg width="12" height="14" viewBox="0 0 12 14"><path d="M1 12h5V2h5M3 8l3-3 3 3" fill="none" stroke="#000" strokeWidth="1.200" /></svg></SoftButton>
                <SoftButton $width={19} aria-label="Falling edge"><svg width="12" height="14" viewBox="0 0 12 14"><path d="M1 2h5v9h5M3 5l3 3 3-3" fill="none" stroke="#000" strokeWidth="1.200" /></svg></SoftButton>
                <span />
                <SoftButton $width={20} $on>A</SoftButton>
                <SoftButton $width={20} disabled>B</SoftButton>
                <SoftButton $width={24} disabled>Ext</SoftButton>
              </ButtonLine>
            </Field>
            <Field $end={8}>
              <label htmlFor="level">Level:</label>
              <TextBox id="level" $width={84} defaultValue="0" />
              <TextBox aria-label="Level unit" $width={32} defaultValue=" V" />
            </Field>
            <ButtonLine $indent={2} $gap={2}><Choices options={[['Single', 44], ['Normal', 50], ['Auto', 33], ['None', 38]]} value={trig} onChange={setTrig} /></ButtonLine>
          </Group>
        </Groups>
      </ScopeWindow>
    </>
  );
};

/* ---------- spreadsheet view ---------- */

const Spreadsheet = styled.section`
  display: flex;
  height: 179px;
  padding: 3px 7px 5px 1px;
  border-top: 1px solid #808080;
  border-bottom: 1px solid #a0a0a0;
`;

const SideStrip = styled.div`
  display: flex;
  flex-direction: column;
  align-items: center;
  gap: 2px;
  width: 26px;
  h2{
    flex: 1;
    width: 26px;
    margin: 0;
    padding-top: 4px;
    font-family: "DejaVu Sans", sans-serif;
    font-size: 13px;
    font-weight: 400;
    line-height: 20px;
    writing-mode: vertical-rl;
    transform: rotate(180deg);
    background: linear-gradient(0deg, #d7e4f2, #bfcddb);
  }
`;

const SheetBody = styled.div`
  display: flex;
  flex-direction: column;
  flex: 1;
  margin-left: 5px;
`;

const Log = styled.div`
  display: flex;
  height: 141px;
  margin-top: 4px;
  background: #fff;
  border: 1px solid #828790;
  box-shadow: 0 2px 0 #f0f0f0, 0 3px 0 #808080;
  ul{ flex: 1; padding: 2px 0 0 27px; }
  li{ line-height: 24px; }
`;

const message = 'Probes do not plot to the Grapher for interactive simulation. Connect an oscilloscope or run a transient simulation to see Grapher data.';

const StatusBar = styled.footer`
  display: flex;
  align-items: center;
  justify-content: flex-end;
  height: 24px;
  padding: 2px 6px 0 0;
  font-size: 13px;
  > span{
    width: 183px;
    height: 20px;
    padding-left: 4px;
    line-height: 22px;
    border-left: 1px solid #d0d0d0;
  }
`;

const Meter = styled.div`
  display: flex;
  gap: 2px;
  padding-left: 4px;
  border-left: 1px solid #d0d0d0;
  i{
    width: 6px;
    height: 13px;
    border: 1px solid;
    border-color: #a0a0a0 #f8f8f8 #f8f8f8 #a0a0a0;
  }
`;

/* ---------- taskbar ---------- */

const Taskbar = styled.footer`
  display: flex;
  align-items: center;
  height: 60px;
  padding-bottom: 1px;
  color: #fff;
  border-top: 1px solid #4a5254;
  background: linear-gradient(90deg, #172d35 0%, #202c2f 13%, #2b2a29 24%, #1d2f37 40%, #192740 52%, #20222f 70%, #281f2c 88%, #2a2425 100%);
`;

const Weather = styled.button`
  display: flex;
  align-items: center;
  gap: 8px;
  width: 380px;
  padding-left: 24px;
  font-size: 14px;
  line-height: 20px;
  text-align: left;
  small{ display: block; font-size: 14px; color: #c8cccd; }
`;

const SearchPill = styled.label`
  display: flex;
  align-items: center;
  gap: 12px;
  width: 273px;
  height: 40px;
  margin: 0 3px 0 4px;
  padding: 0 7px 0 14px;
  background: rgba(255, 255, 255, .13);
  border: 1px solid rgba(255, 255, 255, .14);
  border-radius: 20px;
  input{
    flex: 1;
    min-width: 0;
    font-size: 16px;
    outline: none;
    &::placeholder{ color: #d0d3d4; opacity: 1; }
  }
`;

const TaskButton = styled.button`
  position: relative;
  display: grid;
  place-items: center;
  width: 51px;
  height: 50px;
  margin: 0 2px;
  border-radius: 5px;
  background: ${p => (p.$active ? 'rgba(255, 255, 255, .1)' : 'none')};
  ${p => p.$running && css`
    &::after{
      content: '';
      position: absolute;
      bottom: 0;
      width: ${p.$active ? 20 : 8}px;
      height: 4px;
      border-radius: 2px;
      background: ${p.$active ? '#4cc2ff' : '#9a9a9f'};
    }
  `}
`;

const Tray = styled.div`
  display: flex;
  align-items: center;
  margin-left: auto;
  padding-right: 23px;
  button{ display: grid; place-items: center; }
  svg{ margin: 0 5px; }
  time{
    margin-left: 19px;
    line-height: 20px;
    text-align: right;
  }
`;

const chrome = <><path d="M16 17L3.500 9.500A14.500 14.500 0 0 1 28.800 10z" fill="#e94335" /><path d="M16 17L3.500 9.500A14.500 14.500 0 0 0 16 31.500l6-10z" fill="#34a853" /><path d="M16 10h12.800A14.500 14.500 0 0 1 16 31.500l6-11z" fill="#fbc116" /><circle cx="16" cy="17" r="7" fill="#fff" /><circle cx="16" cy="17" r="5.500" fill="#1a73e8" /></>;

const taskIcons = [
  { label: 'Task view', art: <><rect x="10" y="3" width="20" height="20" fill="#e8e8e8" /><rect x="2" y="10" width="19" height="19" fill="#888" opacity=".9" /><rect x="10" y="10" width="11" height="13" fill="#bbb" /></> },
  { label: 'Chat', art: <><path d="M3 30V15a13 12 0 1 1 13 13q-4 0-6-1z" fill="#7b6fd0" /><rect x="8" y="12" width="11" height="11" rx="2" fill="#fff" /><path d="M20 16l5-3v9l-5-3z" fill="#fff" /><circle cx="27" cy="5" r="9.500" fill="#4cc2ff" /><text x="27" y="10" fontSize="13" textAnchor="middle" fontFamily={UI} fill="#000">1</text></> },
  { label: 'File Explorer', art: <><path d="M1 4h11l3 4h16v19H1z" fill="#e3a012" /><path d="M1 9h30v19H1z" fill="#fcd052" /><path d="M7 29v-6q0-2 2-2h14q2 0 2 2v6z" fill="#1878c8" /></> },
  { label: 'Edge', art: <><circle cx="16" cy="16" r="15" fill="#1b7cc4" /><path d="M1 14Q4 1 17 1q13 1 14 13 0 8-8 8-5 0-4-4 1-6-6-7-8 0-12 3z" fill="#35bfc8" /><path d="M20 2q11 3 11 12-1 6-7 7-6 0-5-4 6-6 1-15z" fill="#5bdc78" /><path d="M13 11q-8 3-5 11t14 7q-8 3-16-3T1 13q6-5 12-2z" fill="#0f6cc4" /><path d="M13 13q-3 8 4 12t12-1q-3 7-11 7-10-4-9-12 1-4 4-6z" fill="#1046a0" opacity=".8" /></> },
  { label: 'Store', art: <><path d="M10 8V3h12v5" fill="none" stroke="#38b8f0" strokeWidth="2" /><path d="M2 7h28v18q0 4-4 4H6q-4 0-4-4z" fill="#fff" /><path d="M9 12h6v6H9z" fill="#f25022" /><path d="M17 12h6v6h-6z" fill="#7fba00" /><path d="M9 20h6v6H9z" fill="#00a4ef" /><path d="M17 20h6v6h-6z" fill="#ffb900" /></> },
  { label: 'Mail', art: <><path d="M1 13L16 2l15 11v17H1z" fill="#0f60b0" /><path d="M4 12h24l-12 13z" fill="#f3f3f3" /><path d="M1 13l15 12 15-12v17H1z" fill="#38b0f0" /></> },
  { label: 'myHP', art: <><rect x="1" y="1" width="30" height="30" rx="1" fill="#0096d6" /><text x="3" y="19" fontSize="10" fontFamily={UI} fill="#fff">my</text><text x="17" y="19" fontSize="13" fontStyle="italic" fontWeight="bold" fontFamily={ARIAL} fill="#fff">hp</text></> },
  { label: 'Alexa', art: <><circle cx="16" cy="16" r="13" fill="none" stroke="#00c8f8" strokeWidth="4" /><path d="M15 31v-4q-4 0-7-3l3 5z" fill="#00c8f8" /><path d="M15.500 27v4" stroke="#1c2638" /></> },
  { label: 'Dropbox', art: <><rect x="1" y="1" width="30" height="30" fill="#0061fe" /><path d="M11.500 9l4.500 3-4.500 3-4.500-3zM20.500 9l4.500 3-4.500 3-4.500-3zM11.500 15l4.500 3-4.500 3-4.500-3zM20.500 15l4.500 3-4.500 3-4.500-3zM16 19l4.500 3-4.500 3-4.500-3z" fill="#fff" /></> },
  { label: 'Terminal', art: <><rect x="1" y="5" width="30" height="22" rx="2" fill="#484848" /><path d="M1 5h19v4H1z" fill="#d0d0d0" /><path d="M20 5h11v4H20z" fill="#888" /><path d="M5 12l5 5-5 5M14 23h10" fill="none" stroke="#fff" strokeWidth="3" /></> },
  { label: 'Command prompt', art: <><rect x="1" y="1" width="29" height="22" fill="#2c2c2c" stroke="#ccc" strokeWidth="1.500" /><path d="M4 5l3 2-3 2M8 10h3" fill="none" stroke="#fff" strokeWidth="1.200" /><path d="M14 13l6 6-5 5-6-7z" fill="#f05050" /><path d="M17 17l7-7 4 5-6 6z" fill="#4f8ff0" /><path d="M23 20l7-3v6l-8 7-5-5z" fill="#8fe018" /><path d="M14 22l4 3-1 5-7-7z" fill="#c02828" /></> },
  { label: 'Chrome', running: true, art: <>{chrome}<circle cx="27" cy="5" r="9.500" fill="#e83878" /><text x="27" y="9" fontSize="11" textAnchor="middle" fontFamily={UI} fill="#fff">F</text></> },
  { label: 'Chrome profile', running: true, art: <>{chrome}<circle cx="27" cy="5" r="10" fill="#1b1519" /><path d="M19 2l2 5 2-5 2 5 2-5 2 5 2-5 2 5 1-4M19 7h16" stroke="#a66c90" fill="none" /></> },
  { label: 'Multisim', running: true, active: true, art: <g transform="translate(2 2) scale(1.400)">{icons.app}</g> },
  { label: 'Excel', running: true, art: <><path d="M9 3h22v26H9z" fill="#21a366" /><path d="M20 3h11v8H20z" fill="#33c481" /><path d="M9 16h22v13H9z" fill="#185c37" /><path d="M20 16h11v7H20z" fill="#107c41" /><rect x="2" y="8" width="16" height="16" rx="1" fill="#107c41" /><text x="10" y="20" fontSize="12" fontWeight="bold" textAnchor="middle" fontFamily={UI} fill="#fff">X</text></> }
];

/* ---------- data ---------- */

const menus = [['', 'F', 'ile'], ['', 'E', 'dit'], ['', 'V', 'iew'], ['', 'P', 'lace'], ['', 'M', 'CU'], ['', 'S', 'imulate'], ['Tra', 'n', 'sfer'], ['', 'T', 'ools'], ['', 'O', 'ptions'], ['', 'W', 'indow'], ['', 'H', 'elp']];
const components = ['source', 'basic', 'diode', 'trans', 'opamp', 'ttl', 'cmos', 'miscDigital', 'mixed', 'indicator', 'power', 'misc', 'peripheral', 'rf', 'motor', 'ni', 'connector'];
const probes = ['probeV', 'probeA', 'probeW', 'diff', 'dual', 'ref', 'digital', 'gear'];

const Tools = ({ names, width, pressed = [] }) => names.map(name => (
  <ToolButton key={name} aria-label={name} $width={width} $pressed={pressed.includes(name)}><Icon name={name} /></ToolButton>
));

const App = () => {
  const [search, setSearch] = useState('');

  return (
    <Screen>
      <GlobalStyle />
      <TitleBar>
        <Icon name="app" size={18} />
        <span>Pre-Lab8 ~ small signal - Multisim - [Pre-Lab8 ~ small signal *]</span>
        <WindowButtons>
          <button aria-label="Minimize"><svg width="12" height="12"><path d="M0 6.500h12" stroke="#888" /></svg></button>
          <button aria-label="Restore"><svg width="14" height="14" fill="none" stroke="#888"><rect x="1.500" y="3.500" width="9" height="9" rx="2" /><path d="M4 1.500h6q2.500 0 2.500 2.500v6" /></svg></button>
          <button aria-label="Close"><Cross size={14} color="#888" width={1} /></button>
        </WindowButtons>
      </TitleBar>

      <MenuBar>
        <Icon name="schematic" />
        {menus.map(([before, key, after]) => (
          <MenuItem key={key + after}>{before}<u>{key}</u>{after}</MenuItem>
        ))}
        <MdiButtons>
          <BevelButton aria-label="Minimize document"><svg width="12" height="12"><path d="M2 10h7" stroke="#000" strokeWidth="2" /></svg></BevelButton>
          <BevelButton aria-label="Restore document"><svg width="12" height="12" fill="none" stroke="#000"><path d="M4 2.500h7v5H9M4 1.500h7M4 2v3M.5 6.500h7v5h-7zM1 5.500h7" /></svg></BevelButton>
          <BevelButton aria-label="Close document"><Cross width={2.4} /></BevelButton>
        </MdiButtons>
      </MenuBar>

      <ToolRow $height={32}>
        <ToolGroup $end={1}>
          <Tools names={['newDoc', 'open', 'openBlue', 'save']} /><Divider />
          <Tools names={['print', 'preview']} /><Divider />
          <Tools names={['cut', 'copy', 'paste']} /><Divider />
          <Tools names={['undo', 'redo']} />
        </ToolGroup>
        <ToolGroup $start={10} $end={3}>
          <Tools names={['toolbox', 'sheet', 'netlist', 'bars', 'graph', 'calc', 'tree']} width={29} pressed={['toolbox', 'sheet']} /><Divider $tight />
          <Tools names={['wizard', 'database']} width={29} />
          <SelectBox>
            <select aria-label="In-use list"><option>--- In-Use List ---</option></select>
            <svg width="10" height="7" viewBox="0 0 10 7"><path d="M1 1l4 4 4-4" fill="none" stroke="#555" /></svg>
          </SelectBox>
          <Divider />
          <Tools names={['markupA']} width={30} /><DropArrow aria-label="More annotations" />
          <Tools names={['markupB', 'markupC']} width={31} /><DropArrow aria-label="More transfers" /><Divider />
          <Tools names={['find', 'help']} width={29} />
        </ToolGroup>
        <ToolGroup $gap={360}>
          <Tools names={['plus', 'minus', 'area', 'fit', 'full']} />
        </ToolGroup>
      </ToolRow>

      <ToolRow $height={32}>
        <ToolGroup>
          <Tools names={components} /><Divider />
          <Tools names={['mcu']} /><Divider />
          <Tools names={['hier']} />
        </ToolGroup>
        <ToolGroup $gap={4} $width={268} $start={10}>
          <Tools names={['play', 'pause', 'stop']} pressed={['stop']} />
          <Analysis><Icon name="wrench" size={16} />Interactive</Analysis>
        </ToolGroup>
        <ToolGroup $end={4}>
          {probes.map(kind => <ToolButton key={kind} aria-label={kind}><Probe kind={kind} /></ToolButton>)}
        </ToolGroup>
      </ToolRow>

      <Main>
        <Dock>
          <DockHeader>
            <h2>Design Toolbox</h2>
            <BevelButton $size={16} aria-label="Collapse"><svg width="6" height="4"><path d="M0 4l3-4 3 4z" fill="#999" /></svg></BevelButton>
            <BevelButton $size={16} aria-label="Close toolbox"><Cross size={9} width={3} /></BevelButton>
          </DockHeader>
          <DockPanel>
            <DockTools><Tools names={['newBlue', 'open', 'save', 'closeDoc', 'rename', 'history']} width={30} /></DockTools>
            <Tree>
              <ul>
                <li><span>Pre-Lab8 ~ small signal</span></li>
                <li><Icon name="schematic" /><span>Pre-Lab8 ~ small signal</span></li>
              </ul>
              <HScroll />
            </Tree>
          </DockPanel>
          <Tabs $indent={2}>
            <Tab $active>Hierarchy</Tab>
            <Tab>Visibility</Tab>
          </Tabs>
        </Dock>

        <Center>
          <CanvasFrame>
            <CanvasView>
              <Schematic />
              <PageShadow />
            </CanvasView>
            <VScroll $top={21} $thumb={435} />
          </CanvasFrame>
          <DocTabs>
            <DocTab><Icon name="schematic" />Pre-Lab8 ~ small signal *</DocTab>
            <DocRule />
            <BevelButton $size={18} aria-label="Cascade windows"><Icon name="cascade" size={15} /></BevelButton>
          </DocTabs>
        </Center>

        <Instruments>
          <div>
            {instrumentList.map(item => (
              <button key={item.label} aria-label={item.label}><InstrumentIcon item={item} /></button>
            ))}
            <hr />
            <button aria-label="LabVIEW instruments"><svg width="20" height="18" viewBox="0 0 20 18"><rect x="1" y="1" width="18" height="16" fill="#000" stroke="#088" strokeWidth="2" strokeDasharray="2 1" /><path d="M6 3v12l10-6z" fill="#ff0" /><path d="M0 7h5" stroke="#f00" strokeWidth="2" /><path d="M0 12h5" stroke="#00f" strokeWidth="2" /><path d="M16 9h4" stroke="#f80" strokeWidth="2" /></svg></button>
            <svg width="6" height="9"><path d="M1 1l4 3-4 4z" /></svg>
            <hr />
            <button aria-label="ELVIS"><svg width="20" height="16" viewBox="0 0 20 16" fill="none" stroke="#aaa" strokeWidth="1.300"><path d="M1 8l6-3 11 5-6 5zM12 2q6-1 5 2l-6 3M3 10l6 4M7 3l6 3" /></svg></button>
            <hr />
            <button aria-label="Current probe"><svg width="20" height="20" viewBox="0 0 20 20"><circle cx="5" cy="14" r="4.500" fill="#a00" stroke="#400" /><path d="M3 14h4M5 12v4" stroke="#fff" /><path d="M8 10l3-6" stroke="#000" strokeWidth="3" /><path d="M11 4q3-5 5-1t3 0" fill="none" stroke="#000" /><path d="M9 15h11" stroke="#f00" /></svg></button>
          </div>
        </Instruments>
      </Main>

      <Spreadsheet>
        <SideStrip>
          <BevelButton $size={16} aria-label="Close spreadsheet"><Cross size={8} width={3} /></BevelButton>
          <BevelButton $size={16} aria-label="Expand"><svg width="4" height="6"><path d="M0 0l4 3-4 3z" fill="#999" /></svg></BevelButton>
          <h2>Spreadsheet View</h2>
        </SideStrip>
        <SheetBody>
          <Log>
            <ul>
              {[1, 2, 3, 4, 5].map(n => <li key={n}>{message}</li>)}
            </ul>
            <VScroll $top={38} $thumb={78} />
          </Log>
          <Tabs $top={3}>
            <Tab $active>Results</Tab>
            <Tab>Simulation</Tab>
          </Tabs>
        </SheetBody>
      </Spreadsheet>

      <StatusBar>
        <span />
        <span>Tran: 2.682 s</span>
        <Meter>{[1, 2, 3, 4, 5, 6, 7].map(n => <i key={n} />)}</Meter>
      </StatusBar>

      <Taskbar>
        <Weather>
          <svg width="32" height="32" viewBox="0 0 32 32"><circle cx="16" cy="16" r="13" fill="#f39a1e" /><path d="M2 11q-2-5 3-6 2-5 7-3 3 1 3 4 4 1 2 5z" fill="#c8d4f4" /><path d="M15 26q-2-5 3-6 3-4 7-1 6 0 5 5 0 2-3 2z" fill="#d5dffa" /></svg>
          <span>87°F<small>Partly sunny</small></span>
        </Weather>
        <TaskButton aria-label="Start"><svg width="30" height="30"><path d="M1 1h13v13H1zM15 1h14v13H15zM1 15h13v14H1zM15 15h14v14H15z" fill="#35b5fa" /><path d="M1 1h13v13H1z" fill="#74e0ff" /></svg></TaskButton>
        <SearchPill>
          <svg width="19" height="20" viewBox="0 0 19 20" fill="none" stroke="#fff" strokeWidth="1.800"><circle cx="8" cy="8" r="6.500" /><path d="M12.500 13l5 5.500" /></svg>
          <input aria-label="Search" placeholder="Search" value={search} onChange={(e) => setSearch(e.target.value)} />
          <svg width="26" height="26" viewBox="0 0 26 26"><path d="M1 25V13a12 12 0 1 1 12 12z" fill="#fff" stroke="#38a8f0" strokeWidth="1.500" /><path d="M9 5l3 1.500v11l5-3-3-1.500-1-3 6 2.500v4l-7 5-3-2z" fill="#1688e0" /></svg>
        </SearchPill>
        {taskIcons.map(t => (
          <TaskButton key={t.label} aria-label={t.label} $running={t.running} $active={t.active}>
            <svg width="32" height="32" viewBox="0 0 32 32" overflow="visible">{t.art}</svg>
          </TaskButton>
        ))}
        <Tray>
          <button aria-label="Hidden icons"><svg width="16" height="10" viewBox="0 0 16 10"><path d="M2 8l6-6 6 6" fill="none" stroke="#fff" strokeWidth="1.800" /></svg></button>
          <button aria-label="OneDrive"><svg width="46" height="16" viewBox="0 0 46 16"><path d="M15 14q-4-1-2-5 1-3 4-3 3-6 9-4 3 1 4 5 5 1 4 5-1 2-3 2z" fill="#e8e8e8" /><path d="M22 14l10-7q2 1 2 4-1 3-4 3z" fill="#bbb" /></svg></button>
          <button aria-label="Network"><svg width="20" height="18" viewBox="0 0 20 18" fill="none" stroke="#fff" strokeWidth="1.600"><path d="M1 7q9-9 18 0M4 10q6-6 12 0M7 13q3-3 6 0" /><circle cx="10" cy="15" r="1.500" fill="#fff" /></svg></button>
          <button aria-label="Volume"><svg width="20" height="18" viewBox="0 0 20 18" fill="none" stroke="#fff" strokeWidth="1.400"><path d="M1 6h3l5-4v14l-5-4H1zM12 6q2 3 0 6M14 4q4 5 0 10M17 2q5 7 0 14" /></svg></button>
          <button aria-label="Battery"><svg width="20" height="18" viewBox="0 0 20 18" fill="none" stroke="#fff" strokeWidth="1.600"><rect x="3" y="5" width="14" height="10" rx="2" /><path d="M18.500 8v4" /><path d="M9 8h6v4H6z" fill="#fff" /><path d="M2 1v2M6 1v2M1 4h6v2q-1 2-3 2t-3-2zM4 8v4" fill="#fff" /></svg></button>
          <time dateTime="2023-07-13T12:09">12:09 PM<br />7/13/2023</time>
        </Tray>
      </Taskbar>

      <Oscilloscope />
    </Screen>
  );
};

export default App;
